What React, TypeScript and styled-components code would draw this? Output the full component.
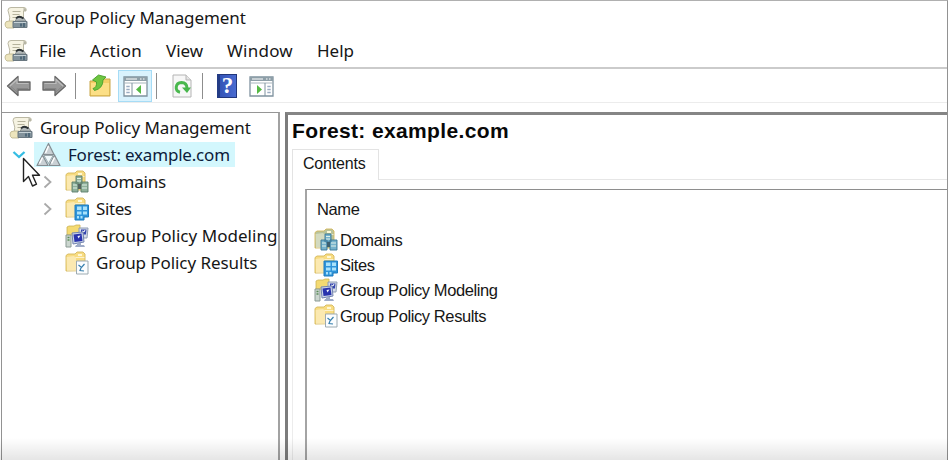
import React from 'react';
import styled, { createGlobalStyle, css } from 'styled-components';

const GlobalStyle = createGlobalStyle`
  * { box-sizing: border-box; }
  body { margin: 0; background: #fff; overflow: hidden; }
  svg { display: block; flex: none; }
`;

const Window = styled.div`
  position: relative;
  width: 948px;
  height: 460px;
  padding-left: 1px;
  display: flex;
  flex-direction: column;
  overflow: hidden;
  background: #fff;
  color: #161616;
  font: 17px/26px 'Noto Sans', sans-serif;
  white-space: nowrap;
`;

const Frame = styled.div`
  position: relative;
  flex: 1;
  display: flex;
  flex-direction: column;
  border: 1px solid #929292;
  border-top-color: #b0b0b0;
  border-bottom: 0;
  min-height: 0;
`;

const TitleBar = styled.header`
  height: 33px;
  padding-left: 2px;
  display: flex;
  align-items: center;
`;

const Label = styled.span<{ $track?: number }>`
  letter-spacing: ${(p) => p.$track ?? -0.07}px;
`;

const TitleText = styled(Label)`
  margin-left: 7px;
`;

const MenuBar = styled.nav`
  height: 33px;
  padding-left: 2px;
  display: flex;
  align-items: center;
`;

const MenuItem = styled.span<{ $width: number; $track?: number }>`
  width: ${(p) => p.$width}px;
  letter-spacing: ${(p) => p.$track ?? 0}px;
`;

const MenuGap = styled.span`
  width: 11px;
`;

const Toolbar = styled.div`
  height: 36px;
  flex: none;
  display: flex;
  align-items: center;
  border-top: 2px solid #cbcbcb;
  border-bottom: 1px solid #ececec;
  padding-left: 3px;
`;

const ToolButton = styled.span<{ $width: number; $inset?: number; $active?: boolean }>`
  width: ${(p) => p.$width}px;
  height: 32px;
  padding-left: ${(p) => p.$inset ?? 0}px;
  display: flex;
  align-items: center;
  justify-content: center;
  ${(p) =>
    p.$active &&
    css`
      margin-right: 4px;
      background: #d9f2fd;
      border: 1px solid #a6dcf6;
    `}
`;

const Separator = styled.i`
  width: 1px;
  height: 26px;
  background: #8d8d8d;
`;

const Body = styled.div`
  flex: 1;
  min-height: 0;
  display: flex;
  gap: 5px;
  padding-top: 9px;
`;

const TreePane = styled.aside`
  width: 278px;
  flex: none;
  overflow: hidden;
  padding-top: 1px;
  border-top: 1px solid #969696;
  border-right: 2px solid #a2a2a2;
`;

const TreeRow = styled.div<{ $indent: number }>`
  height: 27px;
  display: flex;
  align-items: center;
  padding-left: ${(p) => p.$indent}px;
`;

const Twisty = styled.span`
  width: 22px;
  display: flex;
`;

const TreeText = styled(Label)`
  margin-left: 7px;
`;

const Selection = styled.span`
  height: 25px;
  width: 201px;
  padding-left: 2px;
  display: flex;
  align-items: center;
  background: #d3f7fd;
  color: #0d1c3c;
`;

const DetailPane = styled.main`
  flex: 1;
  min-width: 0;
  display: flex;
  flex-direction: column;
  border-top: 3px solid #858585;
  border-left: 3px solid #7c7c7c;
  padding-left: 4px;
  font-family: 'Liberation Sans', sans-serif;
`;

const Heading = styled.h1`
  margin: 0;
  height: 34px;
  font: bold 21px/32px 'Liberation Sans', sans-serif;
  letter-spacing: 0.36px;
  color: #080808;
`;

const TabStrip = styled.div`
  height: 31px;
  flex: none;
  display: flex;
`;

const Tab = styled.span`
  width: 87px;
  padding-left: 10px;
  border: 1px solid #e3e3e3;
  border-bottom: 0;
  font-size: 16px;
  line-height: 27px;
  letter-spacing: -0.2px;
`;

const TabRest = styled.span`
  flex: 1;
  border-bottom: 1px solid #e6e6e6;
`;

const TabPage = styled.section`
  flex: 1;
  min-height: 0;
  display: flex;
  padding: 9px 0 0 12px;
  border-left: 1px solid #ececec;
`;

const ListBox = styled.div`
  flex: 1;
  border-top: 1px solid #8e8e8e;
  border-left: 2px solid #a4a4a4;
  padding: 6px 0 0 7px;
  font-size: 16.5px;
`;

const ListLabel = styled.span`
  letter-spacing: -0.4px;
`;

const ColumnHeader = styled.div`
  height: 31px;
  padding-left: 3px;
  line-height: 27px;
`;

const ListRow = styled.div`
  height: 25.4px;
  display: flex;
  align-items: center;
  gap: 2px;
`;

const BottomShade = styled.div`
  position: absolute;
  left: 0;
  right: 0;
  bottom: 0;
  height: 22px;
  background: linear-gradient(rgba(0, 0, 0, 0), rgba(0, 0, 0, 0.1));
`;

const Pointer = styled.svg`
  position: absolute;
  left: 22px;
  top: 157px;
`;

const ConsoleIcon = () => (
  <svg width="24" height="24" viewBox="0 0 24 24">
    <path d="M4 4.500Q4 1.500 7 1.500H20.500Q23 2 22 5H19.500V18H5Q7 11 4 4.500Z" fill="#f6f3e2" stroke="#b3b09a" strokeWidth=".9" />
    <path d="M19.500 2q3 0 2.500 3h-2.500z" fill="#b6b5a5" />
    <path d="M8.500 5.500h8M8.500 8.500h7M8.500 11.500h5" stroke="#b5b29c" />
    <path d="M1 18q0-3 4-3h5v7H3q-2-1-2-4z" fill="#ede5bd" stroke="#bab28a" strokeWidth=".8" />
    <path d="M11 15q2-4.500 6-4 3 0 5 4z" fill="#b4babb" stroke="#7d8587" strokeWidth=".8" />
    <path d="M12 12.500q3-3.500 7.500 0" stroke="#2c3235" strokeWidth="1.800" fill="none" />
    <path d="M9 15.500h14v6H9z" fill="#82929b" stroke="#697780" />
    <path d="M10 16.500h12" stroke="#c5d1d6" />
    <path d="M20 17v4M17 17.500v3" stroke="#314f66" strokeWidth="1.200" />
  </svg>
);

const Arrow = ({ right = false }: { right?: boolean }) => (
  <svg width="26" height="24" viewBox="0 0 26 24">
    <g transform={right ? 'translate(26 0) scale(-1 1)' : undefined}>
      <path d="M1.500 12 12 2.500V8h12v8H12v5.500z" fill="#999" stroke="#666" strokeWidth="1.300" strokeLinejoin="round" />
      <path d="M4 12 11 5.500V9.500h11.500" fill="none" stroke="#bcbcbc" strokeWidth="1.200" />
      <path d="M5 12.500 11 18v-3.500h11" fill="none" stroke="#858585" />
    </g>
  </svg>
);

const Folder = ({ tint = '#f8dc82' }: { tint?: string }) => (
  <>
    <path d="M1 4.500 3 3h7l2-2h6l2 2v17H1z" fill={tint} stroke="#d5b85c" strokeWidth=".9" />
    <path d="M13 3h4v2h-4z" fill="#fff8d5" />
    <path d="M1.500 6 9 5l2 2v14l-9-1z" fill="#fff" opacity=".38" />
    <path d="M10.500 6.500h9" stroke="#fff" opacity=".6" />
  </>
);

const UpFolderIcon = () => (
  <svg width="24" height="24" viewBox="0 0 24 24">
    <path d="M2 7h9l2-2h9v17H2z" fill="#f3cf66" stroke="#c9a648" />
    <path d="M3 9h18v12H3z" fill="#fcdf86" />
    <path d="M5 14.500q4-1 3.500-6.500L4.500 6l6-5 7.500 2-3 3q0 8.500-8.500 10.500z" fill="#6fc540" stroke="#469f2e" strokeWidth=".9" />
  </svg>
);

const PaneIcon = ({ action = false }: { action?: boolean }) => (
  <svg width="25" height="22" viewBox="0 0 25 22">
    <path d="M1 2h23v19H1z" fill="#fff" stroke="#7f929f" strokeWidth="1.300" />
    <path d="M1 2h23v4H1z" fill="#8e9fa8" />
    <path d="M3 4h11M17 4h1.500M20 4h1.500" stroke="#fff" />
    <path d="M1 8h23" stroke="#a8b5bd" />
    {action ? (
      <>
        <path d="M16 8v13" stroke="#7f929f" />
        <path d="m8 10 5 4.500-5 4.500z" fill="#55b944" />
        <path d="M18.500 11.500h3M18.500 14.500h3M18.500 17.500h3" stroke="#7189a8" strokeWidth="1.500" strokeDasharray="1.200 .6 2" />
      </>
    ) : (
      <>
        <path d="M9 8v13" stroke="#7f929f" />
        <path d="m18 10-5 4.500 5 4.500z" fill="#55b944" />
        <path d="M3.500 11.500h3M3.500 14.500h3M3.500 17.500h3" stroke="#7189a8" strokeWidth="1.500" strokeDasharray="1.200 .6 2" />
      </>
    )}
  </svg>
);

const RefreshIcon = () => (
  <svg width="20" height="24" viewBox="0 0 20 24">
    <path d="M1 1h13l5 5v17H1z" fill="#f7f7f7" stroke="#b4b4b4" />
    <path d="M14 1v5h5" fill="#e4e4e4" stroke="#b5b5b5" />
    <path d="M8 18.200C2.500 17 3 8.800 9.500 8.500q5.500 0 5.500 6" fill="none" stroke="#4ab84e" strokeWidth="3" />
    <path d="M10 13.500h9L15 19z" fill="#47b64b" />
  </svg>
);

const HelpMark = styled.span`
  width: 20px;
  height: 24px;
  border: 1px solid #22377c;
  border-left: 3px solid #233c86;
  background: linear-gradient(90deg, #3454b7, #4a6bd0);
  color: #fff;
  font: bold 23px/22px 'Liberation Serif', serif;
  text-align: center;
`;

const ForestIcon = () => (
  <svg width="25" height="25" viewBox="0 0 25 25">
    <g fill="#c9d0d4" stroke="#858d92" strokeWidth="1.200" strokeLinejoin="round">
      <path d="m12.500 1.500 5.500 11H7z" />
      <path d="m6.500 13 5.500 10.500H1z" />
      <path d="m18.500 13 5.500 10.500H13z" />
    </g>
    <path d="m12.500 4-3 7M6.500 15.500l-3 6M18.500 15.500l-3 6" stroke="#fff" strokeWidth="1.500" />
    <path d="M8 13.500h9l-4.500 8z" fill="#f1fafc" stroke="#8c9498" strokeWidth=".8" />
  </svg>
);

const DomainsIcon = ({ cool = false }: { cool?: boolean }) => (
  <svg width="24" height="24" viewBox="0 0 24 24">
    <Folder tint={cool ? '#b9c39a' : undefined} />
    <g fill={cool ? '#76b2cc' : '#8fb09a'} stroke={cool ? '#397796' : '#5c7d6b'} strokeWidth=".9">
      <path d="M11 6h6v8h-6zM7 12h6v10H7zM16 12h7v10h-7z" />
    </g>
    <path d="M12 8.500h4M12 11h4M8 15h4M8 18h4M17 15h5M17 18h5" stroke="#dff0e7" strokeWidth="1.200" />
    <path d="M13 14h3v5h-3z" fill={cool ? '#3e6070' : '#56625e'} />
  </svg>
);

const SitesIcon = () => (
  <svg width="24" height="24" viewBox="0 0 24 24">
    <Folder />
    <path d="M10 8h13.500v12H19v3h-9z" fill="#2f94da" stroke="#1f7cc0" />
    <path d="M12 9.500h4.500v3.500H12zM18 9.500h4v3.500h-4zM12 14.500h4.500v3H12zM18 14.500h4v3h-4zM12 19h2v2.500h-2zM15.500 19h2v2.500h-2z" fill="#a9e2fb" />
  </svg>
);

const ModelingIcon = () => (
  <svg width="24" height="24" viewBox="0 0 24 24">
    <path d="M2 3 4 2h5l2-1h4v10H2z" fill="#f4da72" stroke="#cbb257" strokeWidth=".8" />
    <path d="M14 4h9l-1 10h-8z" fill="#d6dce9" stroke="#8f9db4" />
    <path d="M16 5.500h5.500l-.5 5h-5z" fill="#3445ad" />
    <path d="m17 7 2 1 1-2" stroke="#fff" fill="none" />
    <path d="M7 9 18 8l1 10-11 2z" fill="#cdd6e8" stroke="#7284af" />
    <path d="m8.500 10.500 8-1 1 7.500-8 1z" fill="#2933ad" />
    <path d="m12.500 12 3-.5-2 3z" fill="#f1f5ff" />
    <path d="M12 19h4v2h3l1 2H10l1-2h1z" fill="#9eabc7" />
    <path d="M1 11h5v12H1z" fill="#cbd6cf" stroke="#8b9a94" />
    <path d="M2.500 13.500h2M2.500 16h2" stroke="#5b8b58" strokeWidth="1.400" />
  </svg>
);

const ResultsIcon = () => (
  <svg width="24" height="24" viewBox="0 0 24 24">
    <Folder />
    <path d="M11.500 10h11.500v13H11.500z" fill="#fbfdfe" stroke="#9daab1" />
    <path d="m13.500 14 3 2.500 3-3.500M16 17l-1 2.500 4 .5" fill="none" stroke="#377fae" strokeWidth="1.200" />
  </svg>
);

const ChevronRight = () => (
  <svg width="10" height="16" viewBox="0 0 10 16">
    <path d="m1.500 2.500 6 5.500-6 5.500" fill="none" stroke="#a9a9a9" strokeWidth="1.800" />
  </svg>
);

const ChevronDown = () => (
  <svg width="14" height="12" viewBox="0 0 14 12">
    <path d="m1.500 3 5.500 5 5.500-5" fill="none" stroke="#35bde3" strokeWidth="2.300" />
  </svg>
);

export default function App() {
  return (
    <Window>
      <GlobalStyle />
      <Frame>
        <TitleBar>
          <ConsoleIcon />
          <TitleText>Group Policy Management</TitleText>
        </TitleBar>
        <MenuBar>
          <ConsoleIcon />
          <MenuGap />
          <MenuItem $width={51}>File</MenuItem>
          <MenuItem $width={76} $track={0.3}>Action</MenuItem>
          <MenuItem $width={61}>View</MenuItem>
          <MenuItem $width={90} $track={0.25}>Window</MenuItem>
          <MenuItem $width={40}>Help</MenuItem>
        </MenuBar>
        <Toolbar>
          <ToolButton $width={28}><Arrow /></ToolButton>
          <ToolButton $width={42}><Arrow right /></ToolButton>
          <Separator />
          <ToolButton $width={42} $inset={6}><UpFolderIcon /></ToolButton>
          <ToolButton $width={34} $active><PaneIcon /></ToolButton>
          <Separator />
          <ToolButton $width={45} $inset={5}><RefreshIcon /></ToolButton>
          <Separator />
          <ToolButton $width={44} $inset={3}><HelpMark>?</HelpMark></ToolButton>
          <ToolButton $width={29}><PaneIcon action /></ToolButton>
        </Toolbar>
        <Body>
          <TreePane>
            <TreeRow $indent={7}><ConsoleIcon /><TreeText>Group Policy Management</TreeText></TreeRow>
            <TreeRow $indent={10}>
              <Twisty><ChevronDown /></Twisty>
              <Selection><ForestIcon /><TreeText $track={-0.2}>Forest: example.com</TreeText></Selection>
            </TreeRow>
            <TreeRow $indent={41}><Twisty><ChevronRight /></Twisty><DomainsIcon /><TreeText $track={-0.15}>Domains</TreeText></TreeRow>
            <TreeRow $indent={41}><Twisty><ChevronRight /></Twisty><SitesIcon /><TreeText $track={-0.4}>Sites</TreeText></TreeRow>
            <TreeRow $indent={63}><ModelingIcon /><TreeText $track={0.03}>Group Policy Modeling</TreeText></TreeRow>
            <TreeRow $indent={63}><ResultsIcon /><TreeText>Group Policy Results</TreeText></TreeRow>
          </TreePane>
          <DetailPane>
            <Heading>Forest: example.com</Heading>
            <TabStrip><Tab>Contents</Tab><TabRest /></TabStrip>
            <TabPage>
              <ListBox>
                <ColumnHeader><ListLabel>Name</ListLabel></ColumnHeader>
                <ListRow><DomainsIcon cool /><ListLabel>Domains</ListLabel></ListRow>
                <ListRow><SitesIcon /><ListLabel>Sites</ListLabel></ListRow>
                <ListRow><ModelingIcon /><ListLabel>Group Policy Modeling</ListLabel></ListRow>
                <ListRow><ResultsIcon /><ListLabel>Group Policy Results</ListLabel></ListRow>
              </ListBox>
            </TabPage>
          </DetailPane>
        </Body>
      </Frame>
      <BottomShade />
      <Pointer width="20" height="32" viewBox="0 0 20 32">
        <path d="M1.500 1.500v23l5-5 4 9.500 4-1.800-4-9h7z" fill="#fff" stroke="#222" strokeWidth="1.400" strokeLinejoin="round" />
      </Pointer>
    </Window>
  );
}
